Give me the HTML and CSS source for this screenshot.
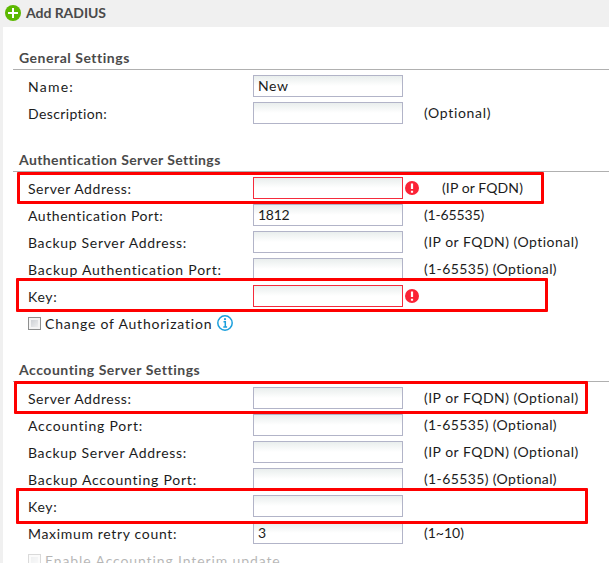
FILE: index.html
```
<!DOCTYPE html>
<html lang="en">
<head>
<meta charset="utf-8">
<title>Add RADIUS</title>
<link rel="stylesheet" href="styles.css">
</head>
<body>
<div class="dialog">
  <header class="titlebar">
    <svg class="add-icon" viewBox="0 0 16 16"><circle cx="8" cy="8" r="8" fill="#5cb800"/><path d="M8 3v10M3 8h10" stroke="#fff" stroke-width="2"/></svg>
    <h1>Add RADIUS</h1>
  </header>
  <main class="panel">
    <section>
      <h2>General Settings</h2>
      <div class="row"><label class="sp-xl">Name:</label><input type="text" value="New"></div>
      <div class="row"><label class="sp-s">Description:</label><input type="text"><span class="hint sp-m">(Optional)</span></div>
    </section>
    <section>
      <h2 class="sp-s">Authentication Server Settings</h2>
      <div class="row mark mark-auth-server"><label>Server Address:</label><input type="text" class="invalid"><svg class="error-icon" viewBox="0 0 14 14"><circle cx="7" cy="7" r="7" fill="#fb2336"/><path d="M7 2.5v5.5M7 9.7v2" stroke="#fff" stroke-width="2.2"/></svg><span class="hint sp-xs">(IP or FQDN)</span></div>
      <div class="row"><label>Authentication Port:</label><input type="text" class="digits" value="1812"><span class="hint sp-n">(1-65535)</span></div>
      <div class="row"><label class="sp-m">Backup Server Address:</label><input type="text"><span class="hint">(IP or FQDN) (Optional)</span></div>
      <div class="row"><label class="sp-l">Backup Authentication Port:</label><input type="text"><span class="hint sp-s">(1-65535) (Optional)</span></div>
      <div class="row mark mark-auth-key"><label class="sp-m">Key:</label><input type="text" class="invalid"><svg class="error-icon" viewBox="0 0 14 14"><circle cx="7" cy="7" r="7" fill="#fb2336"/><path d="M7 2.5v5.5M7 9.7v2" stroke="#fff" stroke-width="2.2"/></svg></div>
      <div class="row check-row"><i class="checkbox"></i><span class="sp-l">Change of Authorization</span><svg class="info-icon" viewBox="0 0 16 16"><circle cx="8" cy="8" r="7.2" fill="none" stroke="#1a9fdc" stroke-width="1.5"/><path d="M6.5 6.8h1.8v5M6.3 12h3.8" fill="none" stroke="#1a9fdc" stroke-width="1.5"/><circle cx="8" cy="4.2" r="1.1" fill="#1a9fdc"/></svg></div>
    </section>
    <section>
      <h2>Accounting Server Settings</h2>
      <div class="row mark mark-acct-server"><label>Server Address:</label><input type="text"><span class="hint">(IP or FQDN) (Optional)</span></div>
      <div class="row"><label class="sp-l">Accounting Port:</label><input type="text"><span class="hint sp-s">(1-65535) (Optional)</span></div>
      <div class="row"><label class="sp-m">Backup Server Address:</label><input type="text"><span class="hint">(IP or FQDN) (Optional)</span></div>
      <div class="row"><label class="sp-l">Backup Accounting Port:</label><input type="text"><span class="hint sp-s">(1-65535) (Optional)</span></div>
      <div class="row mark mark-acct-key"><label class="sp-m">Key:</label><input type="text"></div>
      <div class="row"><label class="sp-m">Maximum retry count:</label><input type="text" value="3"><span class="hint sp-0">(1~10)</span></div>
      <div class="row check-row disabled"><i class="checkbox"></i><span class="sp-xm">Enable Accounting Interim update</span></div>
    </section>
  </main>
</div>
</body>
</html>
```

FILE: styles.css
```
*, *::after { box-sizing: border-box; }
body {
  margin: 0;
  font: 14px/22px Lato, "Century Gothic", sans-serif;
  color: #1c1c1c;
  background: #f0f0f0;
}
.dialog {
  height: 563px;
  overflow: hidden;
  display: flex;
  flex-direction: column;
}
.titlebar {
  flex: none;
  height: 27px;
  padding: 0 0 1px 5px;
  display: flex;
  align-items: center;
  gap: 5px;
}
.add-icon { width: 16px; height: 16px; }
h1, h2 { margin: 0; font-size: 14px; font-weight: 700; color: #4a4a4a; }
h1 { letter-spacing: -.05px; }
.panel {
  flex: 1;
  min-height: 0;
  margin-left: 3px;
  padding-left: 10px;
  background: #fff;
}
h2 {
  height: 43px;
  margin-bottom: 5px;
  padding: 20px 0 0 6px;
  border-bottom: 1px solid #b0b0b0;
  letter-spacing: .52px;
}
.row {
  position: relative;
  height: 27px;
  padding-left: 15px;
  display: flex;
  align-items: flex-start;
  white-space: nowrap;
}
label { width: 225px; padding-top: 1px; letter-spacing: .55px; }
input {
  width: 150px;
  height: 22px;
  padding: 0 4px 1px;
  border: 1px solid #b2b4c8;
  border-radius: 0;
  outline: 0;
  background: linear-gradient(#e9eeed, #fff 10px);
  font: inherit;
  letter-spacing: .6px;
  color: #1c1c1c;
}
.digits { letter-spacing: -.3px; }
.invalid { border-color: #f52b3c; }
.hint { margin-left: 21px; letter-spacing: .48px; }
.error-icon { width: 14px; height: 14px; margin: 4px 0 0 2px; }
.error-icon + .hint { margin-left: 23px; }
.check-row { gap: 4px; padding-top: 1px; }
.checkbox {
  width: 13px;
  height: 13px;
  margin-top: 4px;
  border: 1px solid #8e8f8f;
  background: linear-gradient(135deg, #c5c9ce, #f6f6f6) padding-box;
  box-shadow: inset 0 0 0 2px #f4f4f4;
}
.info-icon { width: 16px; height: 16px; margin: 2px 0 0 1px; }
.disabled { opacity: .32; }
h2.sp-s, .sp-s { letter-spacing: .38px; }
.sp-n { letter-spacing: -.16px; }
.sp-0 { letter-spacing: 0; }
.sp-xs { letter-spacing: .11px; }
.sp-m { letter-spacing: .67px; }
.sp-l { letter-spacing: .78px; }
.sp-xm { letter-spacing: .88px; }
.sp-xl { letter-spacing: 1.23px; }
.mark::after {
  content: "";
  position: absolute;
  z-index: 1;
  border: 3px solid #fe0000;
  border-radius: 1px;
}
.mark-auth-server::after { left: 4px; top: -5px; width: 527px; height: 32px; }
.mark-auth-key::after { left: 3px; top: -7px; width: 532px; height: 34px; }
.mark-acct-server::after { left: 1px; top: -6px; width: 574px; height: 33px; }
.mark-acct-key::after { left: 3px; top: -7px; width: 572px; height: 36px; }
```
